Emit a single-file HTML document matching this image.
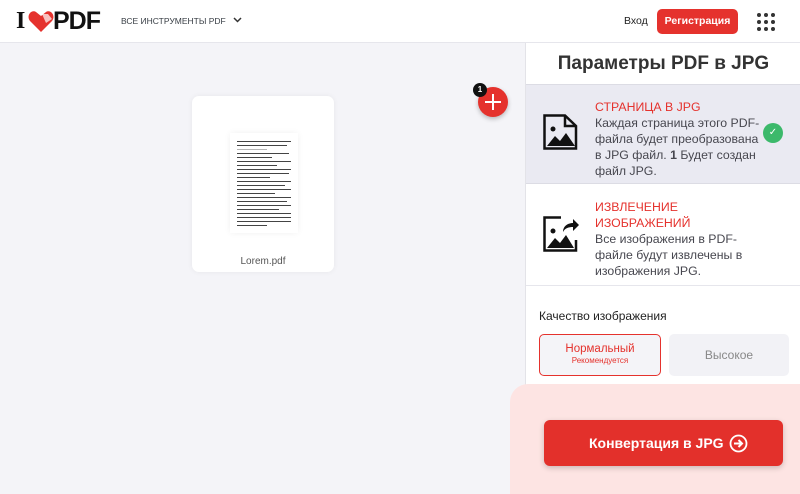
<!DOCTYPE html>
<html><head><meta charset="utf-8"><style>
*{box-sizing:border-box;margin:0;padding:0}
body{width:800px;height:484px;overflow:hidden;font-family:"Liberation Sans",sans-serif;background:#f4f4f8;position:relative;color:#383e45}
.hdr{position:absolute;left:0;top:0;width:800px;height:43px;background:#fff;border-bottom:1px solid #e6e6ec}
.abs{position:absolute}
.right{position:absolute;left:525px;top:43px;width:275px;height:441px;background:#fff;border-left:1px solid #e3e3e8}
.opt{position:absolute;left:0;width:275px;font-size:12.3px;line-height:16px;color:#47474f}
.opt .t{color:#e5322d}
.ln{height:1px;background:#444;margin-bottom:3px}
</style></head><body>
<div class="hdr">
 <div class="abs" style="left:16px;top:8px;font:900 24px 'Liberation Serif',serif;color:#111;letter-spacing:-1px">I</div>
 <svg class="abs" style="left:28px;top:11px" width="26" height="22" viewBox="0 0 26 22"><path d="M13 21 L2 10 C-2 5 3 -2 8 1 L13 5 L18 1 C23 -2 28 5 24 10 Z" fill="#e5322d"/><path d="M14 3 L20 3 L24 8 L18 12 Z" fill="#fff" opacity=".7"/></svg>
 <div class="abs" style="left:53px;top:7px;font:900 25px 'Liberation Sans',sans-serif;color:#111;letter-spacing:-1px">PDF</div>
 <div class="abs" style="left:121px;top:16px;font-size:8.5px;color:#383e45">ВСЕ ИНСТРУМЕНТЫ PDF</div>
 <svg class="abs" style="left:233px;top:17px" width="9" height="6"><path d="M1 1 L4.5 4.5 L8 1" stroke="#333" stroke-width="1.5" fill="none"/></svg>
 <div class="abs" style="left:624px;top:15px;font-size:10.5px;color:#222">Вход</div>
 <div class="abs" style="left:657px;top:9px;width:81px;height:25px;background:#e5322d;border-radius:5px;color:#fff;font-size:10.5px;font-weight:bold;text-align:center;line-height:25px">Регистрация</div>
 <svg class="abs" style="left:756px;top:13px" width="20" height="20"><g fill="#333"><circle cx="3" cy="2" r="2"/><circle cx="10" cy="2" r="2"/><circle cx="17" cy="2" r="2"/><circle cx="3" cy="9" r="2"/><circle cx="10" cy="9" r="2"/><circle cx="17" cy="9" r="2"/><circle cx="3" cy="16" r="2"/><circle cx="10" cy="16" r="2"/><circle cx="17" cy="16" r="2"/></g></svg>
</div>

<div class="abs" style="left:192px;top:96px;width:142px;height:176px;background:#fff;border-radius:7px;box-shadow:0 0 6px rgba(0,0,0,.06)"></div>
<div class="abs" style="left:230px;top:133px;width:68px;height:100px;background:#fff;box-shadow:0 0 6px rgba(0,0,0,.06);padding:8px 7px">
 <div class="ln" style="width:54px"></div><div class="ln" style="width:50px"></div><div class="ln" style="width:30px;opacity:.4"></div><div class="ln" style="width:52px"></div><div class="ln" style="width:35px"></div><div class="ln" style="width:54px"></div><div class="ln" style="width:40px"></div><div class="ln" style="width:54px"></div><div class="ln" style="width:52px"></div><div class="ln" style="width:33px"></div><div class="ln" style="width:54px"></div><div class="ln" style="width:48px"></div><div class="ln" style="width:54px"></div><div class="ln" style="width:38px"></div><div class="ln" style="width:54px"></div><div class="ln" style="width:50px"></div><div class="ln" style="width:54px"></div><div class="ln" style="width:42px"></div><div class="ln" style="width:54px"></div><div class="ln" style="width:54px"></div><div class="ln" style="width:54px"></div><div class="ln" style="width:30px"></div>
</div>
<div class="abs" style="left:192px;top:256px;width:142px;text-align:center;font-size:10px;color:#555">Lorem.pdf</div>

<div class="abs" style="left:478px;top:87px;width:30px;height:30px;border-radius:50%;background:#e5322d;box-shadow:0 2px 5px rgba(0,0,0,.25)"></div>
<div class="abs" style="left:485px;top:101px;width:16px;height:2px;background:#fff"></div>
<div class="abs" style="left:492px;top:94px;width:2px;height:16px;background:#fff"></div>
<div class="abs" style="left:473px;top:83px;width:14px;height:14px;border-radius:50%;background:#111;color:#fff;font-size:8px;font-weight:bold;text-align:center;line-height:14px">1</div>

<div class="right">
 <div class="abs" style="left:0;top:10px;width:275px;text-align:center;font-size:19px;font-weight:bold;color:#333">Параметры PDF в JPG</div>
 <div class="opt" style="top:41px;height:100px;background:#eaeaf2;border-top:1px solid #dcdce4;border-bottom:1px solid #dcdce4">
  <svg class="abs" style="left:17px;top:29px" width="35" height="36" viewBox="0 0 35 36"><path d="M1.5 1.5 H22 L33 12 V34.5 H1.5 Z" fill="none" stroke="#111" stroke-width="2.5"/><path d="M22 1.5 V12 H33" fill="none" stroke="#111" stroke-width="2.5"/><circle cx="10" cy="15" r="2.5" fill="#111"/><path d="M4 32 L12 22 L17 27 L23 19 L32 32 Z" fill="#111"/></svg>
  <div class="abs" style="left:69px;top:14px;width:170px"><div class="t">СТРАНИЦА В JPG</div>Каждая страница этого PDF-файла будет преобразована в JPG файл. <b>1</b> Будет создан файл JPG.</div>
  <div class="abs" style="left:237px;top:38px;width:20px;height:20px;border-radius:50%;background:#3cb96b;color:#fff;font-size:10px;text-align:center;line-height:20px">✓</div>
 </div>
 <div class="opt" style="top:141px;height:102px;border-bottom:1px solid #e6e6ec">
  <svg class="abs" style="left:17px;top:32px" width="36" height="36" viewBox="0 0 36 36"><path d="M18 1.5 H1.5 V34.5 H33 V24" fill="none" stroke="#111" stroke-width="2.5"/><circle cx="10" cy="15" r="2.5" fill="#111"/><path d="M4 32 L12 22 L17 27 L23 19 L31 32 Z" fill="#111"/><path d="M20 16 C20 10 25 7 30 7 V3 L36 9 L30 15 V11 C26 11 22 12 20 16 Z" fill="#111"/></svg>
  <div class="abs" style="left:69px;top:15px;width:170px"><div class="t">ИЗВЛЕЧЕНИЕ<br>ИЗОБРАЖЕНИЙ</div>Все изображения в PDF-файле будут извлечены в изображения JPG.</div>
 </div>
 <div class="abs" style="left:13px;top:266px;font-size:12px;color:#222">Качество изображения</div>
 <div class="abs" style="left:13px;top:291px;width:122px;height:42px;border:1.5px solid #e5322d;border-radius:5px;background:#f4f4f8;text-align:center;color:#e5322d">
  <div style="font-size:11.5px;margin-top:8px">Нормальный</div><div style="font-size:8px;margin-top:1px">Рекомендуется</div></div>
 <div class="abs" style="left:143px;top:291px;width:120px;height:42px;border-radius:5px;background:#f2f2f6;text-align:center;color:#888;font-size:12px;line-height:42px">Высокое</div>
</div>
<div class="abs" style="left:510px;top:384px;width:300px;height:110px;background:#fde4e3;border-top-left-radius:18px"></div>
<div class="abs" style="left:544px;top:420px;width:239px;height:46px;background:#e3302b;border-radius:6px;box-shadow:0 2px 6px rgba(0,0,0,.2);color:#fff;font-size:14px;font-weight:bold;line-height:46px;padding-left:45px">Конвертация в JPG</div>
<svg class="abs" style="left:729px;top:434px" width="19" height="19" viewBox="0 0 19 19"><circle cx="9.5" cy="9.5" r="8" fill="none" stroke="#fff" stroke-width="1.8"/><path d="M5 9.5 H12 M9.5 6 L13 9.5 L9.5 13" fill="none" stroke="#fff" stroke-width="2"/></svg>
</body></html>
